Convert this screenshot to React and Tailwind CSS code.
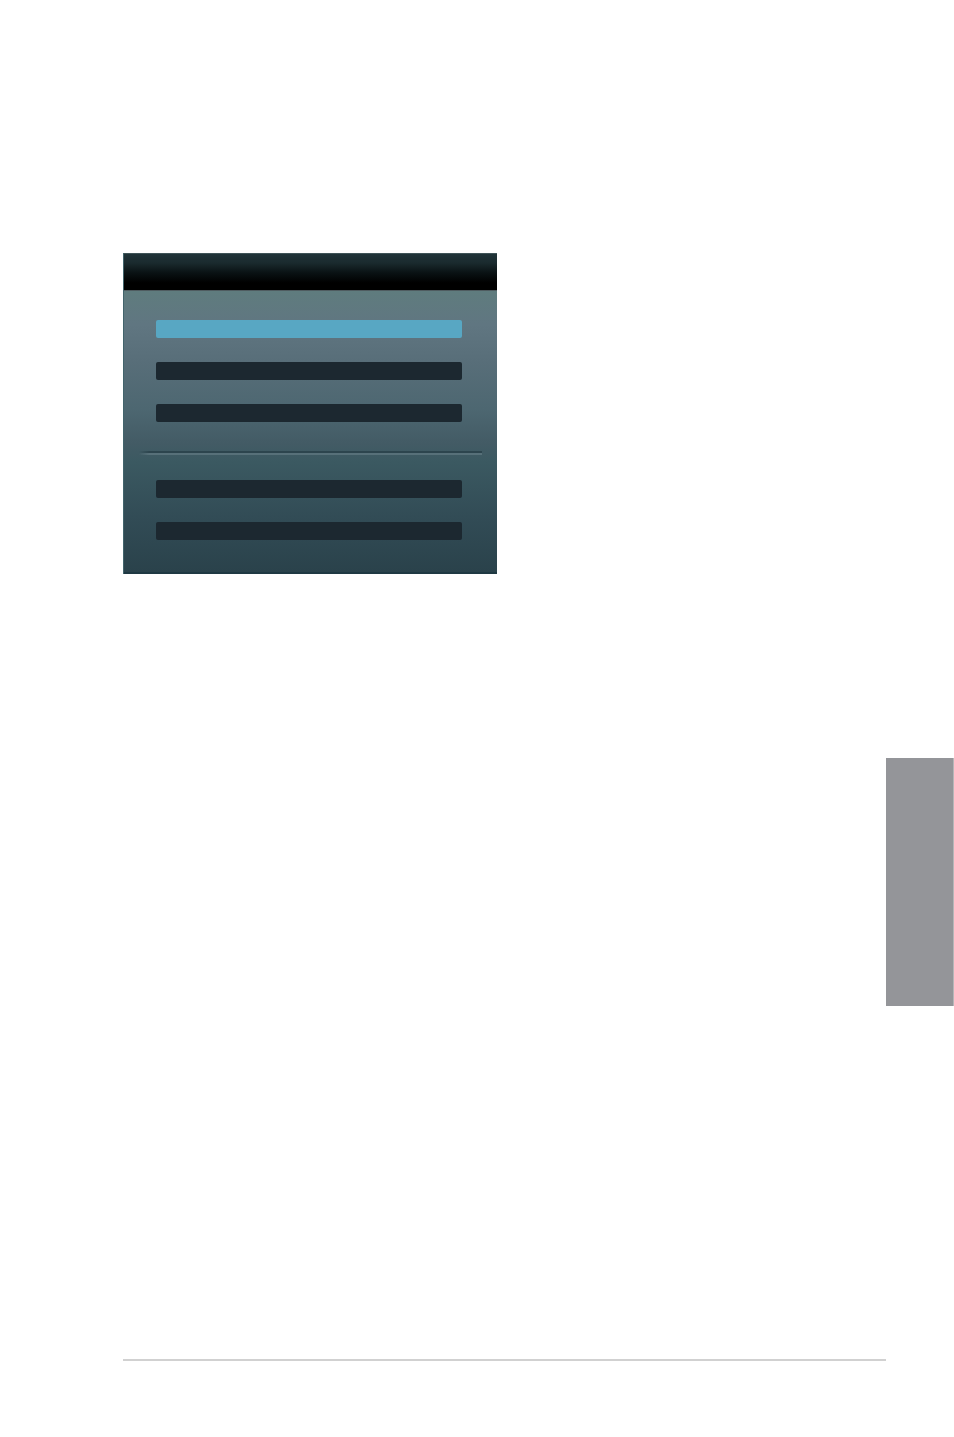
const groups = [
  [
    { id: "first", label: "Option 1", selected: true },
    { id: "second", label: "Option 2", selected: false },
    { id: "third", label: "Option 3", selected: false },
  ],
  [
    { id: "fourth", label: "Option 4", selected: false },
    { id: "fifth", label: "Option 5", selected: false },
  ],
];

function MenuButton({ label, selected }) {
  return (
    <button
      type="button"
      aria-label={label}
      aria-pressed={selected}
      className={`block h-[18px] w-full rounded-[2px] cursor-pointer ${selected ? "bg-[#58a7c3]" : "bg-[#1c2830]"}`}
    />
  );
}

function MenuGroup({ items }) {
  return (
    <div className="flex flex-col gap-6 pl-8 pr-[35px]">
      {items.map((item) => (
        <MenuButton key={item.id} label={item.label} selected={item.selected} />
      ))}
    </div>
  );
}

function MenuPanel() {
  return (
    <section className="w-[374px] max-w-full border-l border-[#42646c]">
      <header className="h-[37px] border-t border-[#405458] bg-[linear-gradient(to_bottom,#213439_0%,#1a2a2e_25%,#0a1214_52%,#000_80%)]" />
      <div className="border-t border-b-2 border-t-[#4f5c60] border-b-[#1f3943] bg-[linear-gradient(to_bottom,#5f7c7e_0%,#607681_12%,#586e79_25%,#4d6771_42%,#435b65_54%,#3b5961_61%,#324c56_80%,#2a424b_100%)] pt-[29px] pb-8">
        <MenuGroup items={groups[0]} />
        {/* Engraved divider between the two groups */}
        <div className="mt-[29px] mb-[25px] mx-[15px]">
          <div className="h-[2px] bg-linear-to-r from-[#2d454e]/0 via-[#2d454e] via-3% to-[#2d454e]" />
          <div className="h-[2px] bg-linear-to-r from-[#577079]/0 via-[#577079] via-3% to-[#577079]" />
        </div>
        <MenuGroup items={groups[1]} />
      </div>
    </section>
  );
}

function App() {
  return (
    <main className="min-h-screen flex flex-col bg-white pt-[253px] pb-[76px]">
      <div className="pl-[123px]">
        <MenuPanel />
      </div>
      <aside className="mt-[184px] h-[248px] w-[68px] self-end border-r border-[#b5b6b8] bg-[#949599]" />
      <hr className="mt-auto ml-[123px] mr-[68px] border-t-2 border-[#d1d1d1]" />
    </main>
  );
}

export default App;
